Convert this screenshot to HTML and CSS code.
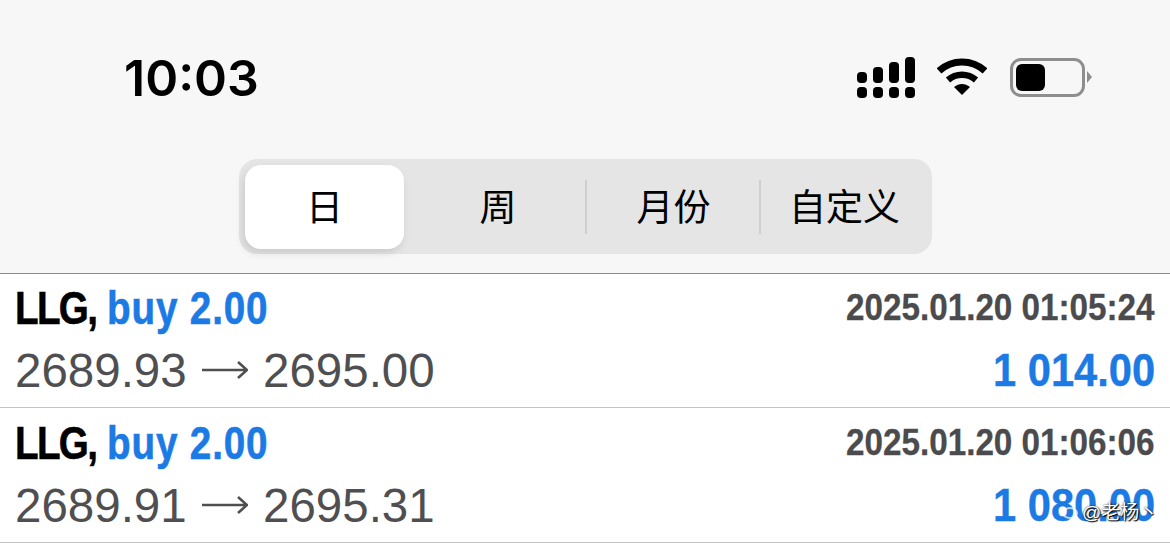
FILE: index.html
```html
<!DOCTYPE html>
<html lang="zh">
<head>
    <meta charset="UTF-8">
    <meta name="viewport" content="width=device-width, initial-scale=1.0">
    <title>交易历史</title>
    <link rel="stylesheet" href="styles.css">
</head>
<body>

    <div class="header">
        <div class="status-bar">
            <span class="time">10:03</span>
            <div class="status-icons">
                <svg class="signal" width="60" height="42" viewBox="0 0 60 42">
                    <rect x="1" y="16" width="10" height="11" rx="4"/>
                    <rect x="17" y="11" width="10" height="16" rx="4"/>
                    <rect x="33" y="6" width="10" height="21" rx="4"/>
                    <rect x="49" y="1" width="10" height="26" rx="4"/>
                    <rect x="1" y="31" width="10" height="11" rx="4"/>
                    <rect x="17" y="31" width="10" height="11" rx="4"/>
                    <rect x="33" y="31" width="10" height="11" rx="4"/>
                    <rect x="49" y="31" width="10" height="11" rx="4"/>
                </svg>
                <svg class="wifi" width="50" height="38" viewBox="0 0 50 38">
                    <path d="M2 13 C15 1 35 1 48 13" fill="none" stroke="#000" stroke-width="7"/>
                    <path d="M11 22 C19 15 31 15 39 22" fill="none" stroke="#000" stroke-width="6.5"/>
                    <path d="M17 29 C22 25 28 25 33 29 L25 37 Z"/>
                </svg>
                <div class="battery">
                    <div class="battery-body"><div class="battery-level"></div></div>
                    <div class="battery-cap"></div>
                </div>
            </div>
        </div>
        <div class="segments">
            <div class="segment active">日</div>
            <div class="segment week">周</div>
            <div class="segment month">月份</div>
            <div class="segment custom">自定义</div>
        </div>
    </div>

    <div class="deals">
        <div class="deal">
            <div class="deal-line">
                <span class="deal-title"><b>LLG,</b> <span class="blue">buy 2.00</span></span>
                <span class="deal-date">2025.01.20 01:05:24</span>
            </div>
            <div class="deal-line">
                <span class="deal-price">
                    <span class="price-open">2689.93</span>
                    <svg class="arrow" width="46" height="20" viewBox="0 0 46 20"><path d="M0 10 H45 M36 2 L45 10 L36 18" fill="none" stroke="#4f4f51" stroke-width="2.6"/></svg>
                    <span>2695.00</span>
                </span>
                <span class="deal-profit">1 014.00</span>
            </div>
        </div>
        <div class="deal">
            <div class="deal-line">
                <span class="deal-title"><b>LLG,</b> <span class="blue">buy 2.00</span></span>
                <span class="deal-date">2025.01.20 01:06:06</span>
            </div>
            <div class="deal-line">
                <span class="deal-price">
                    <span class="price-open">2689.91</span>
                    <svg class="arrow" width="46" height="20" viewBox="0 0 46 20"><path d="M0 10 H45 M36 2 L45 10 L36 18" fill="none" stroke="#4f4f51" stroke-width="2.6"/></svg>
                    <span>2695.31</span>
                </span>
                <span class="deal-profit">1 080.00</span>
            </div>
        </div>
    </div>

    <div class="watermark">
        <svg class="weibo" width="18" height="16" viewBox="0 0 18 16"><ellipse cx="8" cy="10" rx="7" ry="5" fill="none" stroke="#fff" stroke-width="2"/></svg>
        <span>@老杨丶</span>
    </div>

</body>
</html>
```

FILE: styles.css
```css
body {
    font-family: "Liberation Sans", "Noto Sans CJK SC", sans-serif;
    margin: 0;
    background-color: #fff;
    height: 546px;
    overflow: hidden;
    position: relative;
}
.header {
    background-color: #f7f7f7;
    height: 273px;
    border-bottom: 1px solid #8c8c8c;
}
.status-bar {
    display: flex;
    justify-content: space-between;
    align-items: center;
    height: 60px;
    padding: 48px 78px 0 124px;
}
.time {
    font-family: Inter, sans-serif;
    font-size: 50px;
    font-weight: 600;
    color: #000;
}
.status-icons {
    display: flex;
    align-items: center;
    gap: 21px;
    margin-top: -2px;
}
.battery {
    display: flex;
    align-items: center;
    gap: 2px;
    margin-left: 2px;
}
.battery-body {
    width: 75px;
    height: 39px;
    border: 3px solid #8e8e8e;
    border-radius: 11px;
    padding: 3px;
    box-sizing: border-box;
}
.battery-level {
    width: 29px;
    height: 100%;
    background-color: #000;
    border-radius: 6px;
}
.battery-cap {
    width: 0;
    height: 0;
    border-left: 5px solid #8e8e8e;
    border-top: 6px solid transparent;
    border-bottom: 6px solid transparent;
}
.segments {
    display: flex;
    align-items: center;
    width: 693px;
    height: 95px;
    margin: 51px 0 0 239px;
    padding: 6px;
    box-sizing: border-box;
    background-color: #e5e5e6;
    border-radius: 18px;
}
.segment {
    height: 84px;
    padding-bottom: 4px;
    box-sizing: border-box;
    display: flex;
    align-items: center;
    justify-content: center;
    font-family: "Noto Sans CJK SC", sans-serif;
    font-size: 37px;
    color: #000;
}
.segment.active {
    width: 159px;
    background-color: #fff;
    border-radius: 16px;
    box-shadow: -2px 4px 8px rgba(0, 0, 0, 0.12);
}
.segment.week {
    width: 181px;
    padding-left: 7px;
}
.segment.month {
    width: 174px;
    padding-left: 3px;
}
.segment.custom {
    flex: 1;
    justify-content: flex-start;
    padding-left: 30px;
}
.segment.month, .segment.custom {
    position: relative;
}
.segment.month::before, .segment.custom::before {
    content: "";
    position: absolute;
    left: 0;
    top: 15px;
    width: 2px;
    height: 54px;
    background-color: #cfcfd1;
}
.deal {
    height: 130px;
    margin-bottom: 1px;
    padding: 0 15px 3px;
    display: flex;
    flex-direction: column;
    justify-content: center;
    gap: 14px;
    border-bottom: 1px solid #c4c4c4;
}
.deal-line {
    display: flex;
    justify-content: space-between;
    align-items: center;
    height: 48px;
}
.deal-title {
    font-size: 46px;
    font-weight: bold;
    color: #000;
    transform: scaleX(0.84);
    transform-origin: left center;
    -webkit-text-stroke: 0.6px;
    white-space: nowrap;
}
.deal-title b {
    letter-spacing: -2px;
}
.blue {
    color: #1c7ae4;
    letter-spacing: 1px;
}
.deal-date {
    font-size: 37px;
    font-weight: bold;
    color: #4b4b4d;
    transform: scaleX(0.898);
    transform-origin: right center;
    -webkit-text-stroke: 0.3px;
    white-space: nowrap;
}
.deal-price {
    display: flex;
    align-items: center;
    font-size: 47.5px;
    color: #4f4f51;
}
.price-open {
    width: 172px;
}
.arrow {
    margin: 0 15px;
}
.deal-profit {
    font-size: 46px;
    font-weight: bold;
    color: #1c7ae4;
    transform: scaleX(0.905);
    transform-origin: right center;
    -webkit-text-stroke: 0.4px;
    white-space: nowrap;
}
.watermark {
    position: absolute;
    left: 1062px;
    top: 497px;
    display: flex;
    align-items: center;
    gap: 2px;
    font-size: 19px;
    color: #fff;
    text-shadow: 0 0 2px #000, 1px 1px 1px #000;
}
.weibo {
    opacity: 0.7;
}
```
